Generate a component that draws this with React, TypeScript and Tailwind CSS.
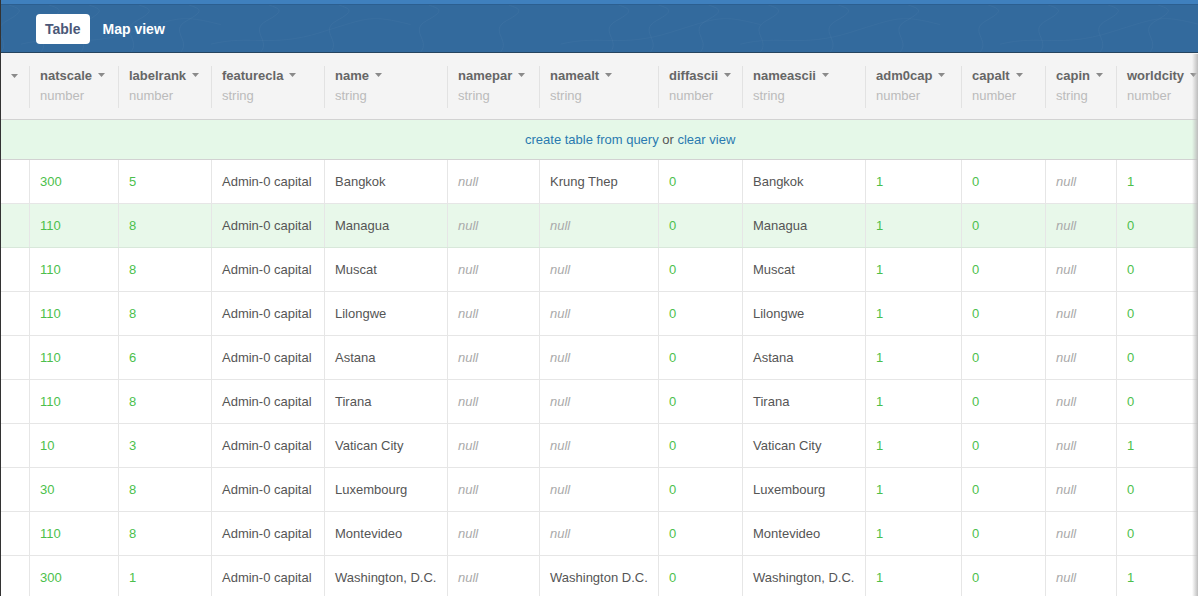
import React from "react";

interface Column {
    name: string;
    type: string;
    width: number;
}

const columns: Column[] = [
    { name: "", type: "", width: 28 },
    { name: "natscale", type: "number", width: 89 },
    { name: "labelrank", type: "number", width: 93 },
    { name: "featurecla", type: "string", width: 113 },
    { name: "name", type: "string", width: 123 },
    { name: "namepar", type: "string", width: 92 },
    { name: "namealt", type: "string", width: 119 },
    { name: "diffascii", type: "number", width: 84 },
    { name: "nameascii", type: "string", width: 123 },
    { name: "adm0cap", type: "number", width: 96 },
    { name: "capalt", type: "number", width: 84 },
    { name: "capin", type: "string", width: 71 },
    { name: "worldcity", type: "number", width: 110 },
];

type Cell = string | number | null;

const rows: Cell[][] = [
    [300, 5, "Admin-0 capital", "Bangkok", null, "Krung Thep", 0, "Bangkok", 1, 0, null, 1],
    [110, 8, "Admin-0 capital", "Managua", null, null, 0, "Managua", 1, 0, null, 0],
    [110, 8, "Admin-0 capital", "Muscat", null, null, 0, "Muscat", 1, 0, null, 0],
    [110, 8, "Admin-0 capital", "Lilongwe", null, null, 0, "Lilongwe", 1, 0, null, 0],
    [110, 6, "Admin-0 capital", "Astana", null, null, 0, "Astana", 1, 0, null, 0],
    [110, 8, "Admin-0 capital", "Tirana", null, null, 0, "Tirana", 1, 0, null, 0],
    [10, 3, "Admin-0 capital", "Vatican City", null, null, 0, "Vatican City", 1, 0, null, 1],
    [30, 8, "Admin-0 capital", "Luxembourg", null, null, 0, "Luxembourg", 1, 0, null, 0],
    [110, 8, "Admin-0 capital", "Montevideo", null, null, 0, "Montevideo", 1, 0, null, 0],
    [300, 1, "Admin-0 capital", "Washington, D.C.", null, "Washington D.C.", 0, "Washington, D.C.", 1, 0, null, 1],
];

const Caret = () => (
    <svg width="7" height="4" viewBox="0 0 7 4" className="inline-block ml-[6px] mb-[3px]">
        <path d="M0 0 L7 0 L3.5 4 Z" fill="#8a8a8a" />
    </svg>
);

// faint contour lines in the blue bar
const Contours = () => (
    <svg className="absolute inset-0 w-full h-full" preserveAspectRatio="none" viewBox="0 0 1198 48">
        {[0, 40, 80, 130, 180, 260, 330, 420, 500, 610, 650, 700, 760, 830, 900, 980, 1040, 1100, 1150].map((x, i) => (
            <path
                key={i}
                d={`M${x} 48 C${x + 10} 36, ${x - 12} 26, ${x + 6} 16 S${x + 20} 4, ${x + 8} 0`}
                stroke="#ffffff"
                strokeOpacity="0.04"
                fill="none"
                strokeWidth="1"
            />
        ))}
        {[20, 210, 560, 740, 1000].map((x, i) => (
            <path
                key={"h" + i}
                d={`M${x} 40 C${x + 40} 30, ${x + 60} 44, ${x + 110} 28 S${x + 160} 10, ${x + 200} 20`}
                stroke="#ffffff"
                strokeOpacity="0.03"
                fill="none"
                strokeWidth="1"
            />
        ))}
    </svg>
);

const renderCell = (value: Cell) => {
    if (value === null) {
        return <span className="italic text-[#aaaaaa]">null</span>;
    }
    if (typeof value === "number") {
        return <span className="text-[#4cbf4c]">{value}</span>;
    }
    return <span className="text-[#555555]">{value}</span>;
};

const App: React.FC = () => {
    return (
        <div
            className="relative w-[1198px] h-[596px] overflow-hidden bg-white border-l border-[#333333] text-[13px]"
            style={{ fontFamily: '"Liberation Sans", Arial, sans-serif' }}
        >
            {/* top bar */}
            <div className="h-[5px] bg-[#3f80be] border-b border-[#2c5f90]" />
            <div className="relative h-[48px] bg-[#336a9d] border-b border-[#25445f] flex items-center pl-[35px] gap-[13px] pt-[1px]">
                <Contours />
                <button className="relative bg-white rounded-[4px] h-[30px] px-[9px] text-[14px] font-bold text-[#4b5878] leading-none">
                    Table
                </button>
                <span className="relative text-white font-bold text-[14px]">Map view</span>
            </div>

            {/* header row */}
            <div className="flex bg-[#f4f4f4] h-[67px] border-b border-[#d2d2d2] items-center w-[1300px] pt-[1px]">
                {columns.map((c, i) => (
                    <div
                        key={i}
                        style={{ width: c.width }}
                        className={
                            i === 0
                                ? "shrink-0 h-[42px] pl-[4px] pt-[3px]"
                                : "shrink-0 h-[42px] border-l border-[#e2e2e2] pl-[10px] pt-[2px]"
                        }
                    >
                        <div className="font-bold text-[#666666] leading-[16px] whitespace-nowrap">
                            {c.name}
                            <Caret />
                        </div>
                        <div className="text-[#bbbbbb] leading-[16px] mt-[4px]">{c.type}</div>
                    </div>
                ))}
            </div>

            {/* query notice */}
            <div className="flex items-center bg-[#e5f8e8] h-[40px] border-b border-[#d2d2d2] pl-[524px]">
                <a className="text-[#2a7ab0]">create table from query</a>
                <span className="text-[#555555] whitespace-pre"> or </span>
                <a className="text-[#2a7ab0]">clear view</a>
            </div>

            {/* data rows */}
            {rows.map((row, r) => (
                <div
                    key={r}
                    className={
                        r === 1
                            ? "flex h-[44px] bg-[#e8f8ea] border-b border-[#d8e8da] w-[1300px]"
                            : "flex h-[44px] bg-white border-b border-[#e6e6e6] w-[1300px]"
                    }
                >
                    <div className="shrink-0" style={{ width: columns[0].width }} />
                    {row.map((v, i) => (
                        <div
                            key={i}
                            style={{ width: columns[i + 1].width }}
                            className="shrink-0 flex items-center border-l border-[#e6e6e6] pl-[10px] whitespace-nowrap overflow-hidden"
                        >
                            {renderCell(v)}
                        </div>
                    ))}
                </div>
            ))}

            {/* right edge shadow */}
            <div className="absolute top-[54px] right-0 bottom-0 w-[6px] bg-gradient-to-r from-transparent to-[#bdbdbd]" />
        </div>
    );
};

export default App;
